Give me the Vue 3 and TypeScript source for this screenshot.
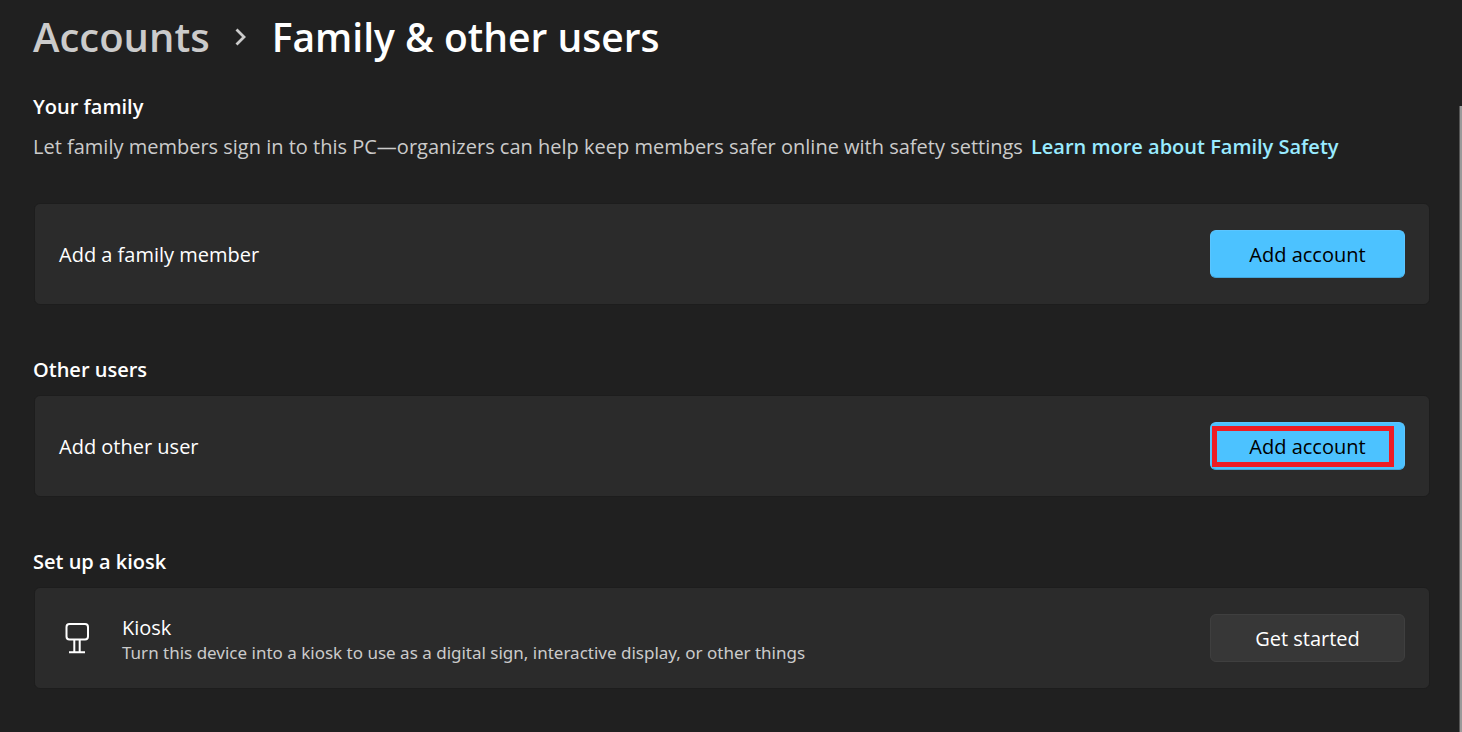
<script setup lang="ts">
interface Card {
  id: string
  heading: string
  label: string
  action: string
  description?: string
  primary: boolean
  highlighted: boolean
}

const cards: Card[] = [
  { id: 'family', heading: 'Your family', label: 'Add a family member', action: 'Add account', primary: true, highlighted: false },
  { id: 'others', heading: 'Other users', label: 'Add other user', action: 'Add account', primary: true, highlighted: true },
  {
    id: 'kiosk',
    heading: 'Set up a kiosk',
    label: 'Kiosk',
    description: 'Turn this device into a kiosk to use as a digital sign, interactive display, or other things',
    action: 'Get started',
    primary: false,
    highlighted: false,
  },
]
</script>

<template>
  <main class="page">
    <h1 class="crumbs">
      <a class="parent" href="#accounts">Accounts</a>
      <svg class="chevron" width="14" height="18" viewBox="0 0 14 18" aria-hidden="true">
        <path d="M2.5 1.5 L10 9 L2.5 16.5" fill="none" stroke="currentColor" stroke-width="2.8" />
      </svg>
      <span>Family &amp; other users</span>
    </h1>
    <section v-for="card in cards" :key="card.id" class="group" :aria-labelledby="card.id">
      <h2 :id="card.id">{{ card.heading }}</h2>
      <p v-if="card.id === 'family'" class="intro">
        <span>Let family members sign in to this PC—organizers can help keep members safer online with safety settings</span>
        <a href="#family-safety">Learn more about Family Safety</a>
      </p>
      <div class="card">
        <svg v-if="card.description" class="icon" width="36" height="36" viewBox="0 0 36 36" aria-hidden="true">
          <g fill="none" stroke="currentColor" stroke-width="2">
            <rect x="7.5" y="4" width="21.5" height="15.5" rx="3" />
            <path d="M15.3 19 V32 M20.7 19 V32 M10 32.2 H26" />
          </g>
        </svg>
        <div class="text">
          <div class="label">{{ card.label }}</div>
          <div v-if="card.description" class="description">{{ card.description }}</div>
        </div>
        <button type="button" :class="['action', { primary: card.primary, highlighted: card.highlighted }]">{{ card.action }}</button>
      </div>
    </section>
    <div class="scrollbar" aria-hidden="true"></div>
  </main>
</template>

<style>
body {
  background: #202020;
}
</style>

<style scoped>
.page {
  position: relative;
  box-sizing: border-box;
  min-height: 100vh;
  padding: 11px 32px 40px 33px;
  background: #202020;
  color: #fff;
  font-family: "Segoe UI", "Open Sans", "Noto Sans", sans-serif;
  font-size: 20px;
  line-height: 28px;
}
.crumbs {
  display: flex;
  align-items: center;
  margin: 0 0 30px;
  font-size: 39px;
  line-height: 52px;
  font-weight: 600;
}
.parent {
  color: #cbcbcb;
  font-size: 40px;
  text-decoration: none;
}
.chevron {
  margin: 0 24px;
  color: #cbcbcb;
}
.group {
  margin-bottom: 51px;
}
.group:last-of-type {
  margin-bottom: 0;
}
h2 {
  margin: 0 0 11px;
  font-size: 20px;
  line-height: 28px;
  font-weight: 600;
}
.intro {
  display: flex;
  gap: 8px;
  margin: 12px 0 42px;
  color: #cbcbcb;
  white-space: nowrap;
}
.intro a {
  color: #99ebff;
  font-weight: 600;
  text-decoration: none;
}
.card {
  display: flex;
  align-items: center;
  box-sizing: border-box;
  min-height: 102px;
  margin-left: 1px;
  padding: 0 24px;
  border: 1px solid #1d1d1d;
  border-radius: 6px;
  background: #2b2b2b;
}
.icon {
  margin-right: 27px;
}
.text {
  flex: 1;
  padding-top: 2px;
}
.description {
  color: #cbcbcb;
  font-family: "Segoe UI", "Noto Sans", "Open Sans", sans-serif;
  font-size: 17px;
  line-height: 22px;
}
.action {
  position: relative;
  width: 195px;
  height: 48px;
  padding: 2px 0 0;
  border: 1px solid #3f3f3f;
  border-radius: 6px;
  background: #373737;
  color: #fff;
  font: inherit;
}
.primary {
  border-color: #5bc5ff #5bc5ff #42a5d9;
  background: #4cc2ff;
  color: #000;
}
.highlighted::after {
  content: "";
  position: absolute;
  inset: 3px 10px 2px 1px;
  border: 5px solid #ed1c24;
}
.scrollbar {
  position: absolute;
  top: 106px;
  right: 0;
  bottom: 0;
  width: 2px;
  border-left: 1px solid #555;
  background: #9a9a9a;
}
</style>
